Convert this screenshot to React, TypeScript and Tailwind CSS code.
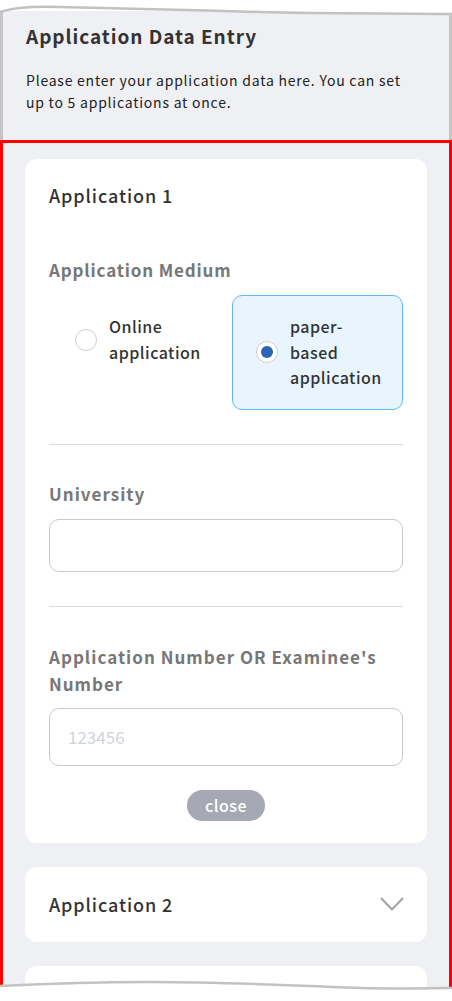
import React from "react";

const font = { fontFamily: '"Noto Sans CJK JP", "Noto Sans", sans-serif' };

function Radio({ checked }: { checked: boolean }) {
  return (
    <span className="flex h-[22px] w-[22px] shrink-0 items-center justify-center rounded-full border-[1.5px] border-[#d0d0d0] bg-white">
      {checked && <span className="h-[12px] w-[12px] rounded-full bg-[#2c64b6]" />}
    </span>
  );
}

function Chevron() {
  return (
    <svg width="24" height="15" viewBox="0 0 24 15" fill="none" className="shrink-0">
      <polyline points="1.5,1.5 12,12.5 22.5,1.5" stroke="#a3a3a3" strokeWidth="2" strokeLinecap="round" strokeLinejoin="round" />
    </svg>
  );
}

export default function App() {
  return (
    <div className="relative h-[1001px] w-[452px] overflow-hidden bg-white" style={font}>
      {/* torn sheet */}
      <div className="mt-[11px] h-[976px] overflow-hidden bg-[#eff0f4]">
        <div className="border-x-[3px] border-[#c5c5c5] pl-[23px] pr-[36px] pt-[11px] pb-[27px]">
          <h1 className="text-[19px] font-bold leading-[28px] tracking-[0.05em] text-[#333]">Application Data Entry</h1>
          <p className="mt-[19px] text-[14px] leading-[22px] tracking-[0.055em] text-[#222]">
            Please enter your application data here. You can set up to 5 applications at once.
          </p>
        </div>

        <div className="border-[3px] border-[#ff0000] px-[22px] pt-[16px] pb-[40px]">
          <section className="rounded-[12px] bg-white px-[24px] pt-[23px] pb-[22px]">
            <h2 className="text-[18px] font-medium leading-[26px] tracking-[0.05em] text-[#333]">Application 1</h2>

            <div className="mt-[49px] text-[17px] font-bold leading-[26px] tracking-[0.05em] text-[#777]">Application Medium</div>
            <div className="mt-[12px] grid grid-cols-[1fr_171px] gap-[10px]">
              <label className="flex items-center gap-[12px] self-start rounded-[10px] border border-transparent pl-[25px] pt-[18px]">
                <Radio checked={false} />
                <span className="text-[16px] font-medium leading-[25.5px] tracking-[0.03em] text-[#333]">
                  Online
                  <br />
                  application
                </span>
              </label>
              <label className="flex items-center gap-[12px] rounded-[10px] border border-[#62b7f0] bg-[#e8f5fe] py-[18px] pl-[23px]">
                <Radio checked />
                <span className="text-[16px] font-medium leading-[25.5px] tracking-[0.03em] text-[#333]">
                  paper-
                  <br />
                  based
                  <br />
                  application
                </span>
              </label>
            </div>

            <div className="mt-[34px] h-px bg-[#dcdcdc]" />

            <div className="mt-[36px] text-[17px] font-bold leading-[26px] tracking-[0.06em] text-[#777]">University</div>
            <input className="mt-[12px] block h-[53px] w-full rounded-[10px] border border-[#c8c8c8] bg-white px-[18px] outline-none" />

            <div className="mt-[34px] h-px bg-[#dcdcdc]" />

            <div className="mt-[36px] text-[17px] font-bold leading-[27px] tracking-[0.06em] text-[#777]">
              Application Number OR Examinee's Number
            </div>
            <input
              placeholder="123456"
              className="mt-[11px] block h-[58px] w-full rounded-[10px] border border-[#c8c8c8] bg-white px-[18px] text-[17px] outline-none placeholder:text-[#cfd3da]"
            />

            <div className="mt-[24px] flex justify-center">
              <button className="h-[31px] w-[78px] rounded-full bg-[#a6a9b4] text-[16px] font-medium leading-[31px] tracking-[0.03em] text-white">
                close
              </button>
            </div>
          </section>

          <section className="mt-[24px] flex h-[75px] items-center justify-between rounded-[12px] bg-white pl-[24px] pr-[23px]">
            <h2 className="text-[18px] font-medium leading-[26px] tracking-[0.05em] text-[#333]">Application 2</h2>
            <Chevron />
          </section>

          <section className="mt-[24px] h-[75px] rounded-[12px] bg-white" />
        </div>
      </div>

      {/* ragged top edge */}
      <svg className="pointer-events-none absolute left-0 top-0" width="452" height="24" viewBox="0 0 452 24">
        <path d="M0 0 H452 V14 C400 13 330 14 260 12 C190 10 110 8 60 7 C30 6 12 8 0 12 Z" fill="#fff" />
        <path d="M0 12 C12 8 30 6 60 7 C110 8 190 10 260 12 C330 14 400 13 452 14" fill="none" stroke="#c2c2c2" strokeWidth="2.5" />
      </svg>

      {/* ragged bottom edge */}
      <svg className="pointer-events-none absolute left-0 top-[970px]" width="452" height="31" viewBox="0 0 452 31">
        <path d="M0 16 C40 14 90 12 150 12 C230 12 300 16 360 18 C400 19 430 18 452 18 V31 H0 Z" fill="#fff" />
        <path d="M0 16 C40 14 90 12 150 12 C230 12 300 16 360 18 C400 19 430 18 452 18" fill="none" stroke="#c2c2c2" strokeWidth="2.5" />
      </svg>
    </div>
  );
}
